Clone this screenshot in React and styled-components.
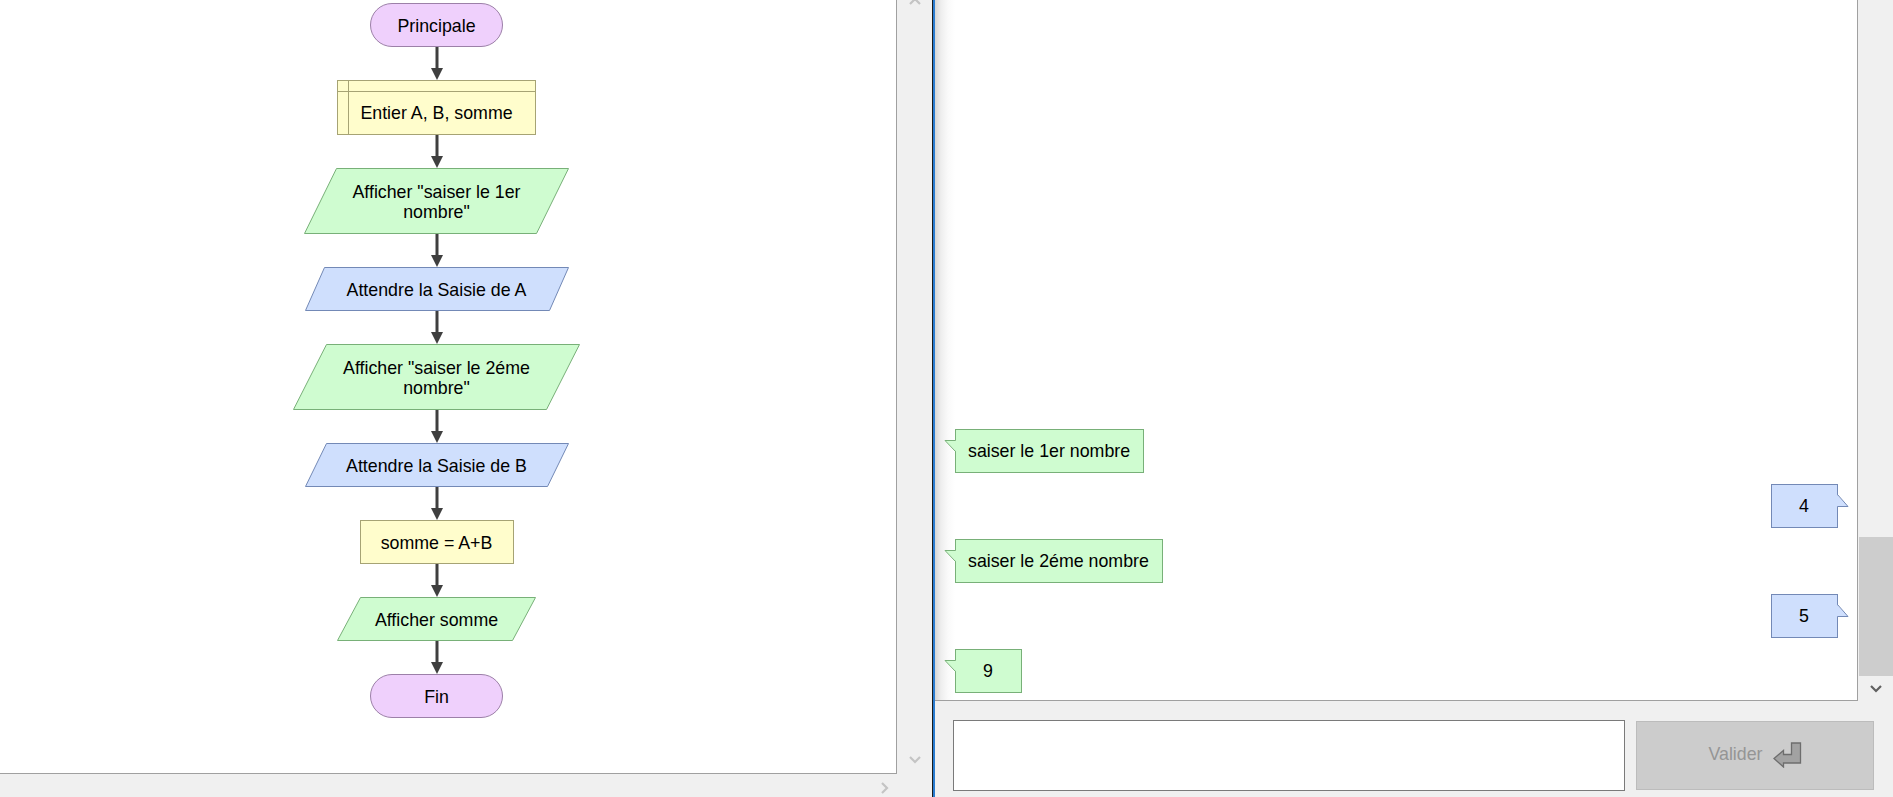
import React from "react"
import styled, { createGlobalStyle } from "styled-components"

const GlobalStyle = createGlobalStyle`
  html, body { margin:0; padding:0; background:#f0f0f0; }
  body { font-family:"Liberation Sans", Arial, sans-serif; }
  * { box-sizing:border-box; }
`

const colors = {
  term: { fill: "#efd0fc", stroke: "#9c80a8" },
  decl: { fill: "#fffdcc", stroke: "#a6a374" },
  out: { fill: "#cffcd0", stroke: "#78b078" },
  in: { fill: "#cfdffd", stroke: "#7389b6" },
}

const Screen = styled.div`
  display:flex;
  width:1893px;
  height:797px;
  overflow:hidden;
  background:#f0f0f0;
  font-family:"Liberation Sans", Arial, sans-serif;
  font-size:17.8px;
  color:#000;
`

/* ---------- left: flowchart editor ---------- */

const LeftPane = styled.div`
  width:932px;
  display:flex;
  flex-direction:column;
`
const LeftTop = styled.div`
  display:flex;
  height:774px;
`
const Canvas = styled.div`
  width:897px;
  background:#fff;
  border-right:1px solid #a0a0a0;
  border-bottom:1px solid #a0a0a0;
  padding:3px 23px 0 0;
  display:flex;
  flex-direction:column;
  align-items:center;
`
const VScroll = styled.div`
  flex:1;
  display:flex;
  flex-direction:column;
  align-items:center;
  justify-content:${p => p.$end ? "flex-end" : "space-between"};
  background:#f0f0f0;
`
const HScroll = styled.div`
  height:23px;
  display:flex;
  align-items:center;
  justify-content:flex-end;
  padding:4px 43px 0 0;
`
const ArrowSlot = styled.div`
  height:${p => p.$h}px;
  display:flex;
  align-items:center;
  justify-content:center;
  margin-top:${p => p.$mt || 0}px;
`
const Thumb = styled.div`
  width:34px;
  height:139px;
  background:#cdcdcd;
`

const Chevron = ({ dir, color }) => {
  const pts = {
    up: "1,7 6,2 11,7",
    down: "1,1 6,6 11,1",
    right: "1,1 6,6 1,11",
  }[dir]
  const w = dir === "right" ? 8 : 12
  const h = dir === "right" ? 12 : 8
  return (
    <svg width={w} height={h} viewBox={`0 0 ${w} ${h}`}>
      <polyline points={pts} fill="none" stroke={color} strokeWidth="2.2" />
    </svg>
  )
}

const Node = styled.div`
  position:relative;
  flex-shrink:0;
  width:${p => p.$w}px;
  height:${p => p.$h}px;
  display:flex;
  align-items:center;
  justify-content:center;
  text-align:center;
`
const ShapeSvg = styled.svg`
  position:absolute;
  left:0;
  top:0;
  overflow:visible;
`
const Label = styled.span`
  position:relative;
  line-height:20px;
  white-space:nowrap;
  padding-top:1px;
`

const Shape = ({ kind, w, h, skew = 0, tone }) => {
  const c = colors[tone]
  let body
  if (kind === "pill") {
    body = <rect x=".5" y=".5" width={w - 1} height={h - 1} rx={(h - 1) / 2} fill={c.fill} stroke={c.stroke} />
  } else if (kind === "para") {
    const pts = `${skew + 0.5},0.5 ${w - 0.5},0.5 ${w - skew - 0.5},${h - 0.5} 0.5,${h - 0.5}`
    body = <polygon points={pts} fill={c.fill} stroke={c.stroke} />
  } else {
    body = (
      <g>
        <rect x=".5" y=".5" width={w - 1} height={h - 1} fill={c.fill} stroke={c.stroke} />
        {kind === "decl" && (
          <g stroke={c.stroke}>
            <line x1="0" y1="11.5" x2={w} y2="11.5" />
            <line x1="11.5" y1="0" x2="11.5" y2={h} />
          </g>
        )}
      </g>
    )
  }
  return (
    <ShapeSvg width={w} height={h} viewBox={`0 0 ${w} ${h}`}>
      {body}
    </ShapeSvg>
  )
}

const FlowNode = ({ kind, tone, w, h, skew, children, offset = 0 }) => (
  <Node $w={w} $h={h}>
    <Shape kind={kind} tone={tone} w={w} h={h} skew={skew} />
    <Label style={offset ? { paddingTop: offset } : undefined}>{children}</Label>
  </Node>
)

const Arrow = () => (
  <svg width="12" height="33" viewBox="0 0 12 33" style={{ flexShrink: 0 }}>
    <line x1="6" y1="0" x2="6" y2="22" stroke="#3f3f3f" strokeWidth="3" />
    <polygon points="0,21 12,21 6,33" fill="#3f3f3f" />
  </svg>
)

const steps = [
  { kind: "pill", tone: "term", w: 133, h: 44, text: "Principale" },
  { kind: "decl", tone: "decl", w: 199, h: 55, text: "Entier A, B, somme", offset: 10 },
  { kind: "para", tone: "out", w: 265, h: 66, skew: 32, text: ["Afficher \"saiser le 1er", "nombre\""] },
  { kind: "para", tone: "in", w: 264, h: 44, skew: 19, text: "Attendre la Saisie de A" },
  { kind: "para", tone: "out", w: 287, h: 66, skew: 33, text: ["Afficher \"saiser le 2éme", "nombre\""] },
  { kind: "para", tone: "in", w: 264, h: 44, skew: 21, text: "Attendre la Saisie de B" },
  { kind: "rect", tone: "decl", w: 154, h: 44, text: "somme = A+B" },
  { kind: "para", tone: "out", w: 199, h: 44, skew: 23, text: "Afficher somme" },
  { kind: "pill", tone: "term", w: 133, h: 44, text: "Fin" },
]

const Splitter = styled.div`
  width:3px;
  border-left:1px solid #1b1b1b;
  background:#2a7cd0;
`

/* ---------- right: console ---------- */

const RightPane = styled.div`
  flex:1;
  display:flex;
  flex-direction:column;
`
const ChatRow = styled.div`
  display:flex;
  height:701px;
`
const ChatArea = styled.div`
  width:923px;
  border-right:1px solid #a0a0a0;
  border-bottom:1px solid #a0a0a0;
  background:linear-gradient(90deg, #d6d6d6 0px, #eeeeee 6px, #fafafa 13px, #fff 20px);
  display:flex;
  flex-direction:column;
  justify-content:flex-end;
  gap:11px;
  padding:0 19px 7px 20px;
`
const Bubble = styled.div`
  position:relative;
  align-self:${p => p.$side === "right" ? "flex-end" : "flex-start"};
  min-width:67px;
  height:44px;
  padding:0 13px 0 12px;
  display:flex;
  align-items:center;
  justify-content:center;
  background:${p => p.$side === "right" ? colors.in.fill : colors.out.fill};
  border:1px solid ${p => p.$side === "right" ? colors.in.stroke : colors.out.stroke};
`
const Tail = styled.svg`
  position:absolute;
  top:9px;
  ${p => p.$side === "right" ? "right:-12px;" : "left:-12px;"}
`

const ChatBubble = ({ side, children }) => {
  const c = side === "right" ? colors.in : colors.out
  return (
    <Bubble $side={side}>
      {side === "right" ? (
        <Tail $side="right" width="12" height="14" viewBox="0 0 12 14">
          <polygon points="0,0.5 11,12.5 0,12.5" fill={c.fill} />
          <polyline points="0.5,0.5 11,12.5 0.5,12.5" fill="none" stroke={c.stroke} />
        </Tail>
      ) : (
        <Tail $side="left" width="12" height="14" viewBox="0 0 12 14">
          <polygon points="12,1.5 1,1.5 12,12.5" fill={c.fill} />
          <polyline points="11.5,1.5 1,1.5 11.5,12.5" fill="none" stroke={c.stroke} />
        </Tail>
      )}
      {children}
    </Bubble>
  )
}

const InputBar = styled.div`
  flex:1;
  display:flex;
  align-items:flex-start;
  gap:11px;
  padding:19px 19px 0 18px;
`
const TextBox = styled.div`
  width:672px;
  height:71px;
  background:#fff;
  border:1px solid #7a7a7a;
`
const SubmitButton = styled.div`
  width:238px;
  height:69px;
  margin-top:1px;
  background:#cccccc;
  border:1px solid #bcbcbc;
  display:flex;
  align-items:center;
  justify-content:center;
  gap:10px;
  color:#959595;
  padding-bottom:2px;
`

const EnterIcon = () => (
  <svg width="29" height="26" viewBox="0 0 29 26">
    <polygon
      points="27.5,1 27.5,21 10.5,21 10.5,25 1,16.5 10.5,8.5 10.5,12.5 18.5,12.5 18.5,1"
      fill="#a2a2a2"
      stroke="#6d6d6d"
      strokeWidth="1.3"
      strokeLinejoin="miter"
    />
  </svg>
)

const messages = [
  { side: "left", text: "saiser le 1er nombre" },
  { side: "right", text: "4" },
  { side: "left", text: "saiser le 2éme nombre" },
  { side: "right", text: "5" },
  { side: "left", text: "9" },
]

const App = () => {
  return (
    <Screen>
      <GlobalStyle />
      <LeftPane>
        <LeftTop>
          <Canvas>
            {steps.map((s, i) => (
              <React.Fragment key={i}>
                {i > 0 && <Arrow />}
                <FlowNode kind={s.kind} tone={s.tone} w={s.w} h={s.h} skew={s.skew} offset={s.offset}>
                  {Array.isArray(s.text) ? (
                    <>
                      {s.text[0]}
                      <br />
                      {s.text[1]}
                    </>
                  ) : s.text}
                </FlowNode>
              </React.Fragment>
            ))}
          </Canvas>
          <VScroll>
            <ArrowSlot $h={8} $mt={-3}>
              <Chevron dir="up" color="#c4c4c4" />
            </ArrowSlot>
            <ArrowSlot $h={28}>
              <Chevron dir="down" color="#c4c4c4" />
            </ArrowSlot>
          </VScroll>
        </LeftTop>
        <HScroll>
          <Chevron dir="right" color="#c4c4c4" />
        </HScroll>
      </LeftPane>

      <Splitter />

      <RightPane>
        <ChatRow>
          <ChatArea>
            {messages.map((m, i) => (
              <ChatBubble key={i} side={m.side}>{m.text}</ChatBubble>
            ))}
          </ChatArea>
          <VScroll $end>
            <Thumb />
            <ArrowSlot $h={25}>
              <Chevron dir="down" color="#606060" />
            </ArrowSlot>
          </VScroll>
        </ChatRow>
        <InputBar>
          <TextBox />
          <SubmitButton>
            Valider
            <EnterIcon />
          </SubmitButton>
        </InputBar>
      </RightPane>
    </Screen>
  )
}

export default App
